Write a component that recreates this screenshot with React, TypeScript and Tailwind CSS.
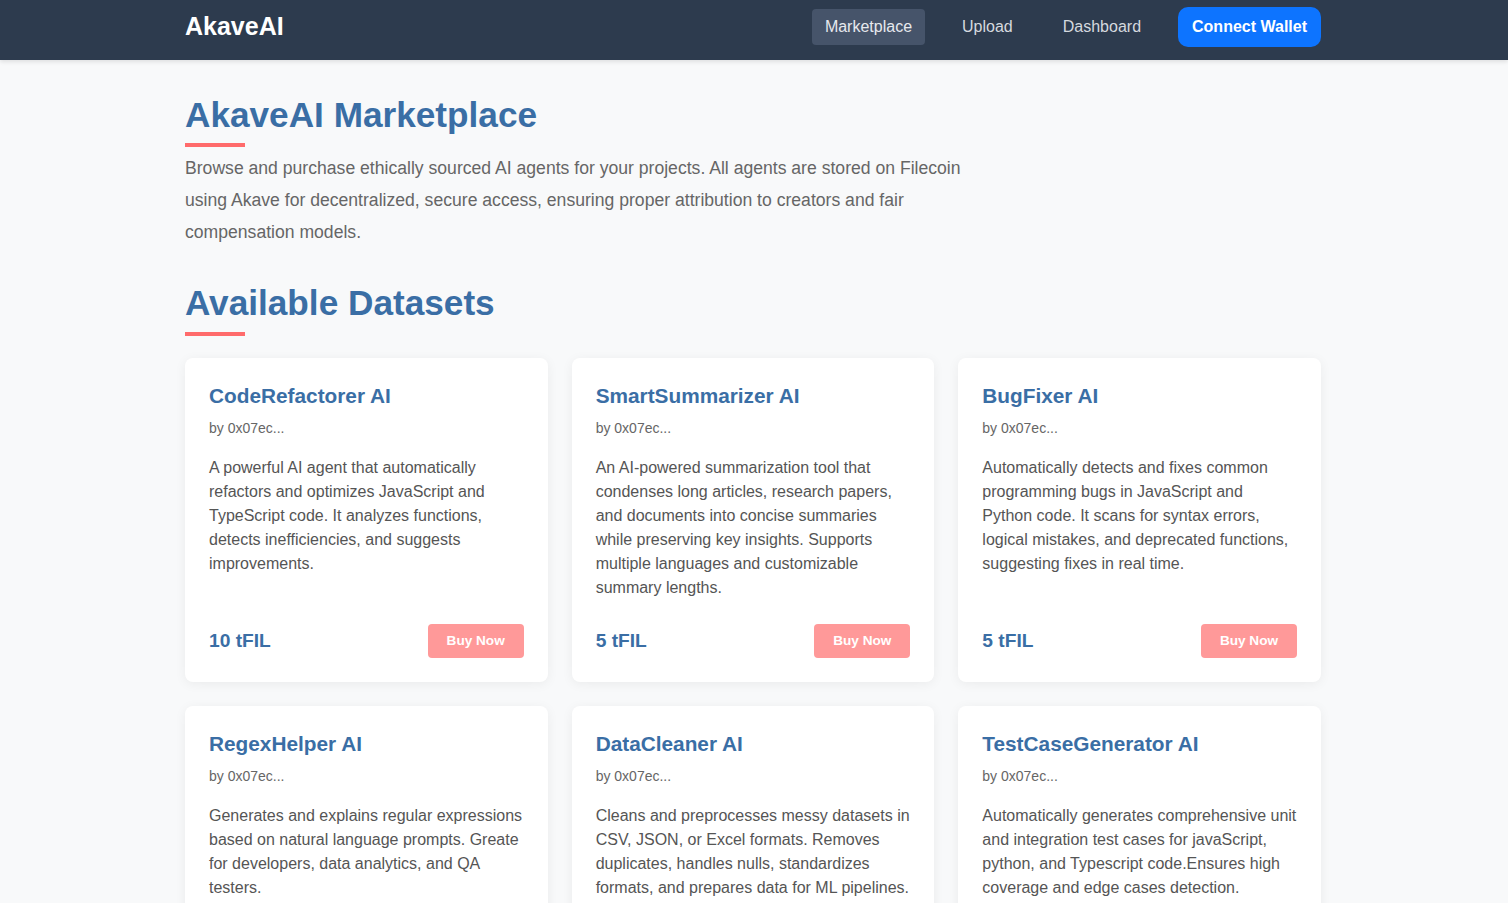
const agents = [
  {
    name: "CodeRefactorer AI",
    description:
      "A powerful AI agent that automatically refactors and optimizes JavaScript and TypeScript code. It analyzes functions, detects inefficiencies, and suggests improvements.",
    price: "10 tFIL",
  },
  {
    name: "SmartSummarizer AI",
    description:
      "An AI-powered summarization tool that condenses long articles, research papers, and documents into concise summaries while preserving key insights. Supports multiple languages and customizable summary lengths.",
    price: "5 tFIL",
  },
  {
    name: "BugFixer AI",
    description:
      "Automatically detects and fixes common programming bugs in JavaScript and Python code. It scans for syntax errors, logical mistakes, and deprecated functions, suggesting fixes in real time.",
    price: "5 tFIL",
  },
  {
    name: "RegexHelper AI",
    description:
      "Generates and explains regular expressions based on natural language prompts. Greate for developers, data analytics, and QA testers.",
    price: "3 tFIL",
  },
  {
    name: "DataCleaner AI",
    description:
      "Cleans and preprocesses messy datasets in CSV, JSON, or Excel formats. Removes duplicates, handles nulls, standardizes formats, and prepares data for ML pipelines.",
    price: "8 tFIL",
  },
  {
    name: "TestCaseGenerator AI",
    description:
      "Automatically generates comprehensive unit and integration test cases for javaScript, python, and Typescript code.Ensures high coverage and edge cases detection.",
    price: "6 tFIL",
  },
];

function AgentCard({ agent }: { agent: (typeof agents)[number] }) {
  return (
    <div className="flex flex-col rounded-lg bg-white p-6 shadow-[0_2px_12px_rgba(0,0,0,0.06)]">
      <h3 className="text-[20.8px] font-bold leading-7 text-[#3a6ea5]">{agent.name}</h3>
      <p className="mt-2 text-[14px] leading-5 text-[#666]">by 0x07ec...</p>
      <p className="mt-[18px] text-[16px] leading-6 text-[#555]">{agent.description}</p>
      <div className="mt-auto flex items-center justify-between pt-6">
        <span className="text-[19.2px] font-bold text-[#3a6ea5]">{agent.price}</span>
        <button className="h-[34px] w-24 rounded bg-[#ff9999] text-[13.6px] font-bold text-white">
          Buy Now
        </button>
      </div>
    </div>
  );
}

export default function App() {
  return (
    <div className="min-h-screen bg-[#f8f9fa] font-['Liberation_Sans',Arial,sans-serif]">
      {/* ================= HEADER ================= */}
      <header className="h-[60px] bg-[#2d3b4e] pb-[6px] shadow-[0_2px_4px_rgba(0,0,0,0.1)]">
        <div className="mx-auto flex h-full max-w-[1202px] items-center justify-between pl-8 pr-[34px]">
          <span className="text-[25px] font-bold text-white">AkaveAI</span>
          <nav className="flex items-center gap-6">
            <a className="rounded bg-[#46546a] px-[13px] py-[6px] text-[16px] text-[#e6e9ee]">
              Marketplace
            </a>
            <a className="px-[13px] py-[6px] text-[16px] text-[#d5d9df]">Upload</a>
            <a className="px-[13px] py-[6px] text-[16px] text-[#d5d9df]">Dashboard</a>
            <button className="h-10 rounded-[10px] bg-[#0d74ff] px-[14px] text-[16px] font-bold text-white">
              Connect Wallet
            </button>
          </nav>
        </div>
      </header>

      <main className="mx-auto max-w-[1202px] pl-8 pr-[34px] pt-[33px]">
        {/* ================= INTRO ================= */}
        <section>
          <h1 className="text-[35.2px] font-bold leading-[44px] text-[#3a6ea5]">
            AkaveAI Marketplace
          </h1>
          <div className="mt-[6px] h-1 w-[60px] bg-[#ff6b6b]" />
          <p className="mt-[5px] max-w-[800px] text-[17.6px] leading-8 text-[#666]">
            Browse and purchase ethically sourced AI agents for your projects. All agents are stored on
            Filecoin using Akave for decentralized, secure access, ensuring proper attribution to creators
            and fair compensation models.
          </p>
        </section>

        {/* ================= DATASETS ================= */}
        <section className="mt-[33px]">
          <h2 className="text-[35.2px] font-bold leading-[44px] text-[#3a6ea5]">Available Datasets</h2>
          <div className="mt-[7px] h-1 w-[60px] bg-[#ff6b6b]" />
          <div className="mt-[22px] grid grid-cols-3 gap-6 pb-10">
            {agents.map((a) => (
              <AgentCard key={a.name} agent={a} />
            ))}
          </div>
        </section>
      </main>
    </div>
  );
}
